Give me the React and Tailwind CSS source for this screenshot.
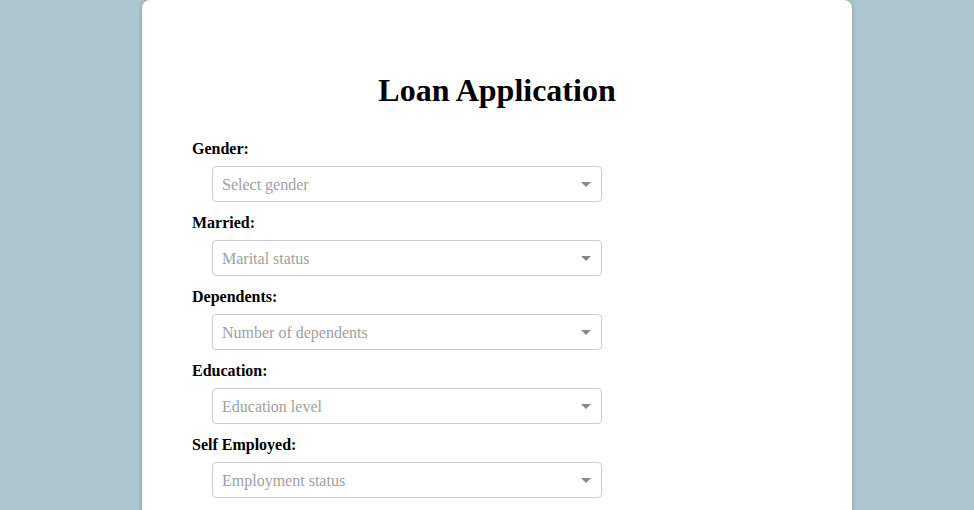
export default function App() {
  const fields = [
    ["Gender:", "Select gender"],
    ["Married:", "Marital status"],
    ["Dependents:", "Number of dependents"],
    ["Education:", "Education level"],
    ["Self Employed:", "Employment status"],
  ];
  return (
    <div className="min-h-[510px] h-[510px] overflow-hidden bg-[#aec6cf] pl-[142px]" style={{ fontFamily: '"Liberation Serif", "Times New Roman", serif' }}>
      <div className="w-[710px] min-h-[600px] bg-white rounded-[8px] shadow-[0_0_4px_rgba(0,0,0,0.25)] px-[50px] pt-[72px]">
        <h1 className="text-[32px] leading-[37px] font-bold text-black text-center">Loan Application</h1>
        <div className="mt-[30px] flex flex-col">
          {fields.map(([label, ph]) => (
            <div key={label} className="h-[74px]">
              <div className="pt-[1px] text-[16px] leading-[18px] font-bold text-black">{label}</div>
              <div className="mt-[8px] ml-[20px] w-[390px] h-[36px] border border-[#cccccc] rounded-[4px] flex items-center justify-between pl-[9px] pr-[10px]">
                <span className="pt-[2px] text-[16px] leading-[18px] text-[#a0a0a0]">{ph}</span>
                <span className="w-0 h-0 border-l-[5px] border-r-[5px] border-t-[5px] border-l-transparent border-r-transparent border-t-[#888888]" />
              </div>
            </div>
          ))}
        </div>
      </div>
    </div>
  );
}
